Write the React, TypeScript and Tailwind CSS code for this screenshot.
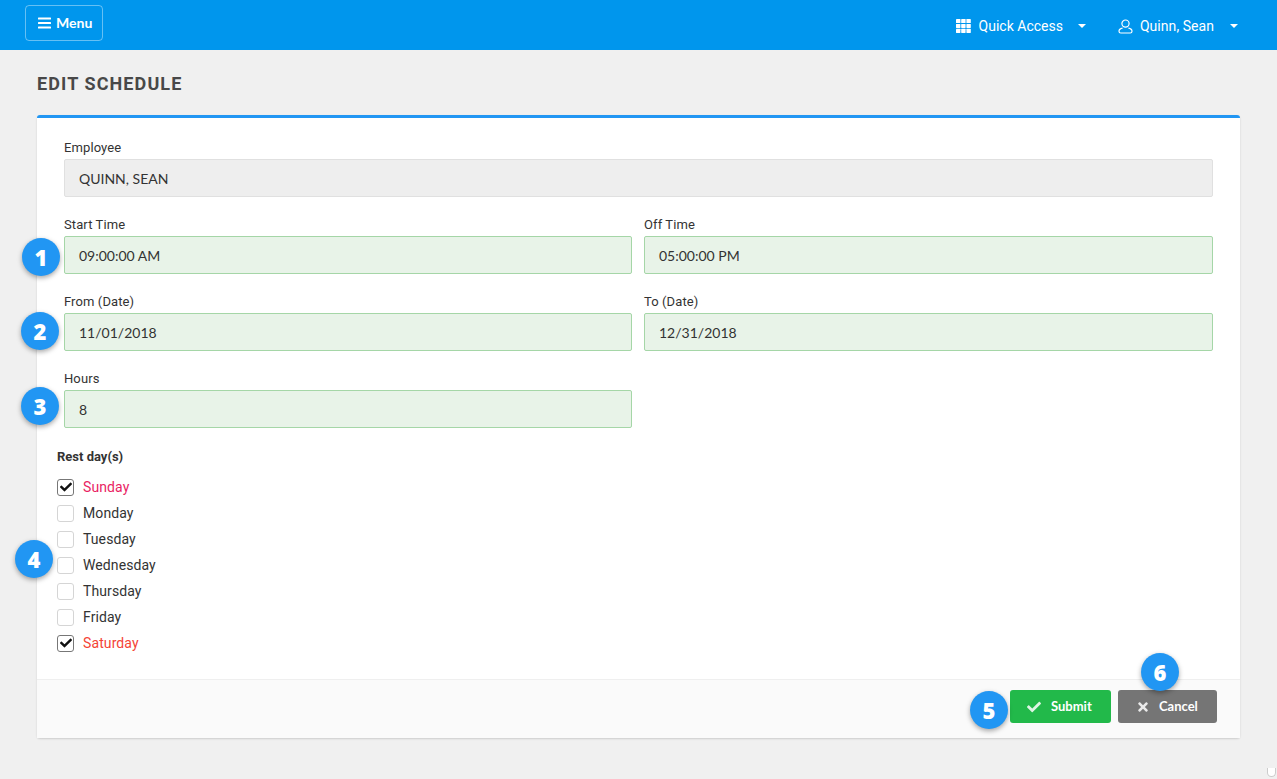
import React from 'react';
import { FaCheck, FaTimes } from 'react-icons/fa';

const roboto = 'font-["Roboto",sans-serif]';
const lato = 'font-["Lato",sans-serif]';

const Caret: React.FC = () => (
  <span className="block w-0 h-0 border-x-[4px] border-x-transparent border-t-[4px] border-t-white" />
);

const GridIcon: React.FC = () => (
  <svg width="15" height="14" viewBox="0 0 15 14" fill="white">
    {[0, 5.2, 10.4].map((x) =>
      [0, 4.9, 9.8].map((y) => <rect key={`${x}-${y}`} x={x} y={y} width="4.4" height="4.1" rx="0.4" />)
    )}
  </svg>
);

const BarsIcon: React.FC = () => (
  <svg width="13" height="12" viewBox="0 0 13 12" fill="white">
    <rect x="0" y="0.5" width="13" height="2" rx="0.5" />
    <rect x="0" y="5" width="13" height="2" rx="0.5" />
    <rect x="0" y="9.5" width="13" height="2" rx="0.5" />
  </svg>
);

const UserIcon: React.FC = () => (
  <svg width="15" height="15" viewBox="0 0 15 15" fill="none" stroke="white" strokeWidth="1.2">
    <circle cx="7.5" cy="4.6" r="3.6" />
    <path d="M4.6 9.2 C2.4 9.6 1 10.8 1 12.2 C1 13.4 1.7 14 2.8 14 H12.2 C13.3 14 14 13.4 14 12.2 C14 10.8 12.6 9.6 10.4 9.2" />
  </svg>
);

const Field: React.FC<{ label: string; value: string; grey?: boolean }> = ({ label, value, grey }) => (
  <div className="flex flex-col">
    <label className="h-[20px] text-[13px] leading-[15px] pt-[1px] tracking-[0.1px] text-[#333]">{label}</label>
    <div
      className={
        grey
          ? `h-[38px] flex items-center px-[14px] pt-[2px] text-sm text-[#333] bg-[#eeeeee] border border-[#e0e0e0] rounded-[2px] ${lato}`
          : `h-[38px] flex items-center px-[14px] pt-[2px] text-sm text-[#333] bg-[#e8f3e8] border border-[#a5d6a7] rounded-[2px] ${lato}`
      }
    >
      {value}
    </div>
  </div>
);

const Day: React.FC<{ name: string; checked?: boolean; color?: string }> = ({ name, checked, color }) => (
  <div className="h-[26px] flex items-center gap-[9px] tracking-[0.1px]">
    <span
      className={
        checked
          ? 'w-[17px] h-[17px] rounded-[3px] border border-[#777] flex items-center justify-center'
          : 'w-[17px] h-[17px] rounded-[3px] border border-[#d5d5d5]'
      }
    >
      {checked && <FaCheck size={12} className="text-[#111]" />}
    </span>
    <span className={color ?? 'text-[#333]'}>{name}</span>
  </div>
);

const Badge: React.FC<{ n: number; className: string }> = ({ n, className }) => (
  <div
    className={`absolute w-[38px] h-[38px] rounded-full bg-[#2196f3] text-white flex items-center justify-center text-[22px] font-extrabold font-["Open_Sans",sans-serif] shadow-[0_2px_5px_rgba(0,0,0,0.35)] ${className}`}
  >
    {n}
  </div>
);

export default function App() {
  return (
    <div className={`relative min-h-[779px] bg-[#f0f0f0] overflow-hidden ${roboto}`}>
      <header className="h-[50px] bg-[#0096ed] flex items-start justify-between pl-[25px] pr-[39px] text-white">
        <button className={`mt-[5px] w-[78px] h-[36px] pl-[12px] flex items-center gap-[5px] border border-white/40 rounded-[4px] text-sm font-bold ${lato}`}>
          <BarsIcon />
          Menu
        </button>
        <div className="h-[50px] pt-[2px] flex items-center text-sm">
          <GridIcon />
          <span className="ml-[8px]">Quick Access</span>
          <span className="ml-[15px]"><Caret /></span>
          <span className="ml-[32px]"><UserIcon /></span>
          <span className="ml-[7px] tracking-[0.05px]">Quinn, Sean</span>
          <span className="ml-[16px]"><Caret /></span>
        </div>
      </header>

      <main className="pl-[37px] pr-[37px]">
        <h1 className="h-[65px] pt-[23px] text-[18px] leading-[22px] font-bold tracking-[1.1px] text-[#484848]">EDIT SCHEDULE</h1>
        <section className="h-[623px] bg-white border-t-[3px] border-[#2196f3] rounded-[3px] shadow-[0_1px_2px_rgba(0,0,0,0.15)] flex flex-col">
          <div className="flex-1 pt-[21px] pl-[27px] pr-[27px]">
            <Field label="Employee" value="QUINN, SEAN" grey />
            <div className="mt-[19px] grid grid-cols-[568px_569px] gap-x-[12px] gap-y-[19px]">
              <Field label="Start Time" value="09:00:00 AM" />
              <Field label="Off Time" value="05:00:00 PM" />
              <Field label="From (Date)" value="11/01/2018" />
              <Field label="To (Date)" value="12/31/2018" />
              <Field label="Hours" value="8" />
            </div>
            <div className="mt-[21px] -ml-[7px] text-sm">
              <div className="h-[26px] text-[13px] leading-[16px] font-bold text-[#333]">Rest day(s)</div>
              <div className="mt-[-1px]">
                <Day name="Sunday" checked color="text-[#e91e63]" />
                <Day name="Monday" />
                <Day name="Tuesday" />
                <Day name="Wednesday" />
                <Day name="Thursday" />
                <Day name="Friday" />
                <Day name="Saturday" checked color="text-[#f44336]" />
              </div>
            </div>
          </div>
          <footer className={`h-[59px] bg-[#fafafa] border-t border-[#efefef] flex items-start justify-end gap-[7px] pt-[10px] pr-[23px] text-[13px] font-bold text-white ${lato}`}>
            <button className="w-[101px] h-[33px] pl-[17px] bg-[#22b94a] rounded-[3px] flex items-center gap-[10px]">
              <FaCheck size={14} className="text-white/85" />
              Submit
            </button>
            <button className="w-[99px] h-[33px] pl-[18px] bg-[#757575] rounded-[3px] flex items-center gap-[9px]">
              <FaTimes size={14} className="text-white/85" />
              Cancel
            </button>
          </footer>
        </section>
      </main>

      <Badge n={1} className="left-[22px] top-[238px]" />
      <Badge n={2} className="left-[21px] top-[312px]" />
      <Badge n={3} className="left-[21px] top-[387px]" />
      <Badge n={4} className="left-[15px] top-[540px]" />
      <Badge n={5} className="left-[970px] top-[691px]" />
      <Badge n={6} className="left-[1141px] top-[653px]" />

      <span className="absolute left-[1267px] top-[768px] w-[9px] h-[9px] border border-[#ccc] border-t-0 rounded-b-full bg-white" />
    </div>
  );
}
